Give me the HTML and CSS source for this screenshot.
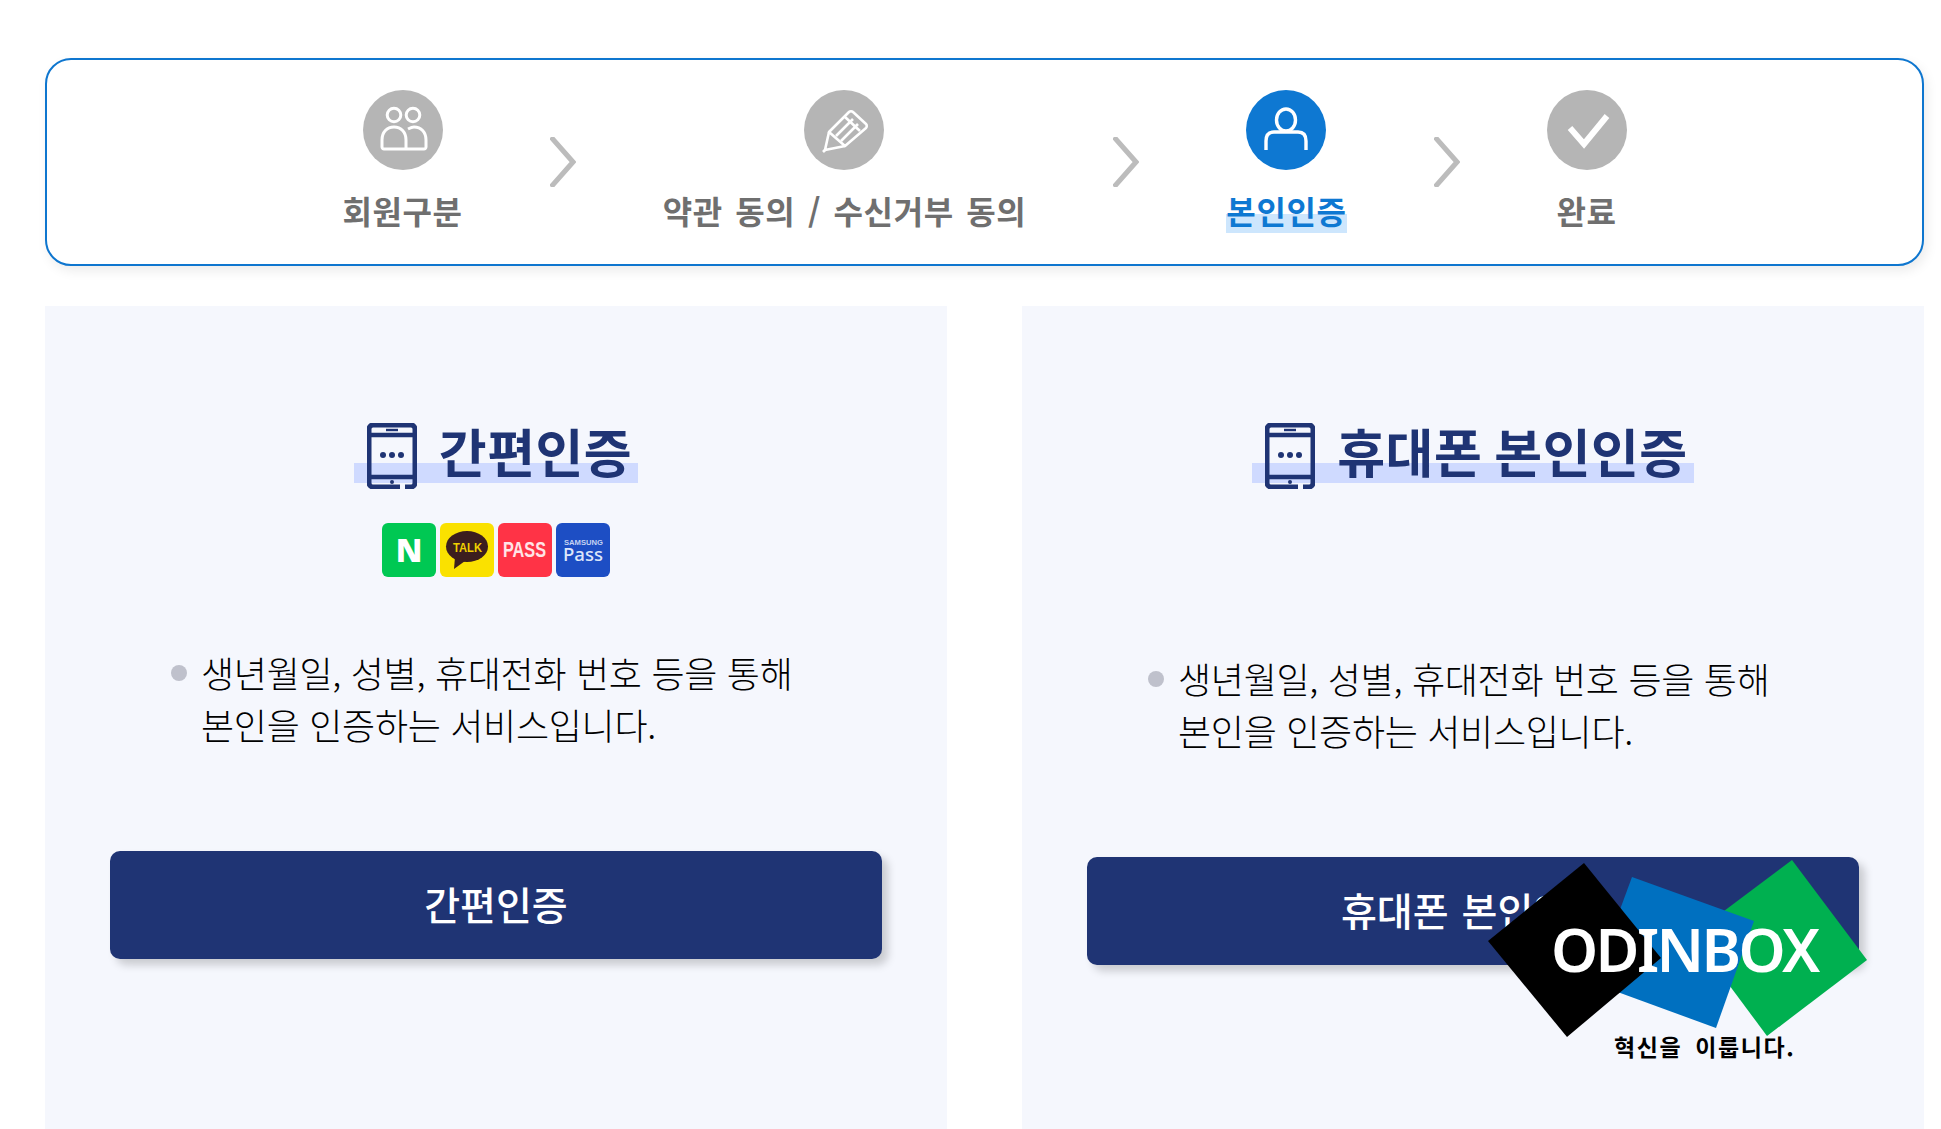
FILE: index.html
```html
<!DOCTYPE html>
<html lang="ko">
<head>
<meta charset="UTF-8">
<title>본인인증</title>
<link rel="stylesheet" href="styles.css">
</head>
<body>
<div class="wrap">
  <ul class="steps">
    <li class="step">
      <span class="step-icon">
        <svg viewBox="0 0 80 80" width="80" height="80" fill="none" stroke="#fff" stroke-width="3">
          <circle cx="31" cy="25" r="6.8"/>
          <circle cx="50" cy="25" r="6.8"/>
          <path d="M43 59V50c0-8-5-13-12-13s-12 5-12 13v7c0 1 1 2 2 2h40c1 0 2-1 2-2v-7c0-8-5-13-12-13-2 0-4 1-6 2"/>
        </svg>
      </span>
      <span class="step-name">회원구분</span>
    </li>
    <li class="step-arrow"><svg viewBox="0 0 26 50" width="26" height="50" fill="none" stroke="#bcbcbc" stroke-width="5"><path d="M1 0l22 25L1 50"/></svg></li>
    <li class="step">
      <span class="step-icon">
        <svg viewBox="0 0 80 80" width="80" height="80" fill="none" stroke="#fff" stroke-width="2.6" stroke-linejoin="round">
          <path d="M25 42L45 22c1-1 3-1 4 0l13 12c1 1 1 3 0 4L41 56z"/>
          <path d="M25 42l-4 18 20-4"/>
          <path d="M41 27l15 14M32 46l17-17M37 51l17-17"/>
          <path d="M21 60l-2 2"/>
        </svg>
      </span>
      <span class="step-name">약관 동의 / 수신거부 동의</span>
    </li>
    <li class="step-arrow"><svg viewBox="0 0 26 50" width="26" height="50" fill="none" stroke="#bcbcbc" stroke-width="5"><path d="M1 0l22 25L1 50"/></svg></li>
    <li class="step on">
      <span class="step-icon">
        <svg viewBox="0 0 80 80" width="80" height="80" fill="none" stroke="#fff" stroke-width="3.4">
          <ellipse cx="40" cy="30" rx="9.5" ry="11"/>
          <path d="M20 60V51c0-6 3-9 8-9h24c5 0 8 3 8 9v9"/>
        </svg>
      </span>
      <span class="step-name"><em>본인인증</em></span>
    </li>
    <li class="step-arrow"><svg viewBox="0 0 26 50" width="26" height="50" fill="none" stroke="#bcbcbc" stroke-width="5"><path d="M1 0l22 25L1 50"/></svg></li>
    <li class="step">
      <span class="step-icon">
        <svg viewBox="0 0 80 80" width="80" height="80" fill="none" stroke="#fff" stroke-width="6">
          <path d="M23 38l14 16 23-28"/>
        </svg>
      </span>
      <span class="step-name">완료</span>
    </li>
  </ul>

  <div class="cert-list">
    <section class="cert">
      <h2 class="cert-title">
        <svg class="phone" viewBox="0 0 50 66" width="50" height="66" fill="none" stroke="#1f3474" stroke-width="4.4">
          <path d="M33 64H6a4 4 0 0 1-4-4V6a4 4 0 0 1 4-4h38a4 4 0 0 1 4 4v54a4 4 0 0 1-4 4h-6" stroke-width="5"/>
          <path d="M2 12h46M2 54h46"/>
          <path d="M19 7h12" stroke-width="2.4"/>
          <circle cx="16" cy="32" r="3" fill="#1f3474" stroke="none"/>
          <circle cx="25" cy="32" r="3" fill="#1f3474" stroke="none"/>
          <circle cx="34" cy="32" r="3" fill="#1f3474" stroke="none"/>
          <circle cx="25" cy="59" r="2" fill="#1f3474" stroke="none"/>
        </svg>
        <span>간편인증</span>
      </h2>
      <div class="cert-logos">
        <span class="logo logo-naver">N</span>
        <span class="logo logo-kakao">
          <svg viewBox="0 0 54 54" width="54" height="54">
            <ellipse cx="27" cy="23.5" rx="21" ry="15.5" fill="#3c1e1e"/>
            <path d="M15 34l-1 12 11-8z" fill="#3c1e1e"/>
            <text x="13" y="29" class="talk" textLength="29" lengthAdjust="spacingAndGlyphs">TALK</text>
          </svg>
        </span>
        <span class="logo logo-pass">
          <svg viewBox="0 0 54 54" width="54" height="54">
            <text x="5" y="34" class="pass" textLength="43" lengthAdjust="spacingAndGlyphs">PASS</text>
          </svg>
        </span>
        <span class="logo logo-samsung">
          <svg viewBox="0 0 54 54" width="54" height="54">
            <text x="8" y="22" class="samsung" textLength="39" lengthAdjust="spacingAndGlyphs">SAMSUNG</text>
            <text x="7" y="38" class="spass" textLength="40" lengthAdjust="spacingAndGlyphs">Pass</text>
          </svg>
        </span>
      </div>
      <p class="cert-desc">생년월일, 성별, 휴대전화 번호 등을 통해<br>본인을 인증하는 서비스입니다.</p>
      <a class="cert-btn">간편인증</a>
    </section>
    <section class="cert">
      <h2 class="cert-title">
        <svg class="phone" viewBox="0 0 50 66" width="50" height="66" fill="none" stroke="#1f3474" stroke-width="4.4">
          <path d="M33 64H6a4 4 0 0 1-4-4V6a4 4 0 0 1 4-4h38a4 4 0 0 1 4 4v54a4 4 0 0 1-4 4h-6" stroke-width="5"/>
          <path d="M2 12h46M2 54h46"/>
          <path d="M19 7h12" stroke-width="2.4"/>
          <circle cx="16" cy="32" r="3" fill="#1f3474" stroke="none"/>
          <circle cx="25" cy="32" r="3" fill="#1f3474" stroke="none"/>
          <circle cx="34" cy="32" r="3" fill="#1f3474" stroke="none"/>
          <circle cx="25" cy="59" r="2" fill="#1f3474" stroke="none"/>
        </svg>
        <span>휴대폰 본인인증</span>
      </h2>
      <div class="cert-logos no-logo"></div>
      <p class="cert-desc">생년월일, 성별, 휴대전화 번호 등을 통해<br>본인을 인증하는 서비스입니다.</p>
      <a class="cert-btn">휴대폰 본인인증</a>
    </section>
  </div>
</div>

<svg class="watermark" viewBox="0 0 400 210" width="400" height="210">
  <polygon points="312,20 387,120 287,196 212,95" fill="#00b050"/>
  <polygon points="152,37 274,81 236,188 113,143" fill="#0070c0"/>
  <polygon points="104,23 181,118 87,197 8,101" fill="#000"/>
  <text x="71" y="132" class="wm-name">ODINBOX</text>
  <text x="134" y="216" class="wm-slogan">혁신을 이룹니다.</text>
</svg>
</body>
</html>
```

FILE: styles.css
```css
html, body { margin: 0; padding: 0; height: 1129px; overflow: hidden; background: #fff; }
body { font-family: "Noto Sans CJK KR", "Noto Sans", sans-serif; position: relative; }
.wrap { padding: 58px 17px 0 45px; }

.steps { list-style: none; margin: 0; padding: 30px 0 0; height: 174px; display: flex; justify-content: center; gap: 87px; border: 2px solid #0e76cf; border-radius: 26px; box-shadow: 3px 5px 12px rgba(0,0,0,.08); background: #fff; }
.step { display: flex; flex-direction: column; align-items: center; }
.step-icon { display: block; width: 80px; height: 80px; border-radius: 50%; background: #b5b5b5; }
.step-icon svg { display: block; }
.step-name { margin-top: 18px; font-size: 32px; line-height: 45px; font-weight: 700; letter-spacing: .6px; word-spacing: 3px; color: #6f6f6f; white-space: nowrap; }
.step.on .step-icon { background: #0e78d2; }
.step.on .step-name { color: #0e78d2; }
.step.on em { font-style: normal; background: linear-gradient(transparent 57%, #cde6fd 57%); display: inline-block; }
.step-arrow { padding-top: 47px; }
.step-arrow svg { display: block; }

.cert-list { display: flex; justify-content: space-between; margin-top: 40px; }
.cert { width: 902px; height: 830px; box-sizing: border-box; padding: 117px 65px 0; background: #f5f7fd; }
.cert-title { position: relative; z-index: 0; width: fit-content; height: 66px; margin: 0 auto; padding: 0 6px 0 13px; display: flex; align-items: flex-start; gap: 22px; }
.cert-title::before { content: ""; position: absolute; left: 0; right: 0; top: 40px; height: 20px; background: #cfdaff; z-index: -1; }
.cert-title span { font-size: 52px; line-height: 56px; font-weight: 700; color: #1f3474; letter-spacing: .5px; word-spacing: -3px; white-space: nowrap; }
.cert-logos { display: flex; justify-content: center; gap: 4px; margin-top: 34px; height: 54px; }
.cert-logos.no-logo { height: 60px; }
.logo { display: block; width: 54px; height: 54px; border-radius: 6px; text-align: center; }
.logo svg { display: block; }
.logo-naver { background: #00c853; color: #fff; font: 900 32px/54px "Noto Sans", sans-serif; }
.logo-kakao { background: #fae100; }
.talk { font: 700 13.5px "Liberation Sans", sans-serif; fill: #f0d000; }
.logo-pass { background: #ff3346; }
.pass { font: 700 22px "Liberation Sans", sans-serif; fill: #ffe4e6; }
.logo-samsung { background: #1d4ec4; }
.samsung { font: 700 7px "Liberation Sans", sans-serif; fill: #c4d2f2; }
.spass { font: 500 18px "Noto Sans", sans-serif; fill: #dde6fa; }

.cert-desc { position: relative; margin: 69px 0 0; padding-left: 91px; font-size: 36px; line-height: 52px; font-weight: 200; letter-spacing: -.3px; color: #000; white-space: nowrap; }
.cert-desc::before { content: ""; position: absolute; left: 61px; top: 19px; width: 16px; height: 16px; border-radius: 50%; background: #bfc1cc; }
.cert-btn { display: block; margin-top: 101px; height: 108px; line-height: 104px; border-radius: 10px; background: #1f3474; color: #fff; text-align: center; font-size: 39px; font-weight: 500; letter-spacing: 0; word-spacing: 2px; box-shadow: 6px 6px 8px rgba(0,0,0,.18); }

.watermark { position: absolute; left: 1480px; top: 840px; overflow: visible; }
.wm-name { font: 600 60px "Noto Sans", sans-serif; letter-spacing: -2.6px; fill: #fff; }
.wm-slogan { font: 700 23px "Noto Sans CJK KR", sans-serif; letter-spacing: 1.6px; word-spacing: 5px; fill: #000; }
```
